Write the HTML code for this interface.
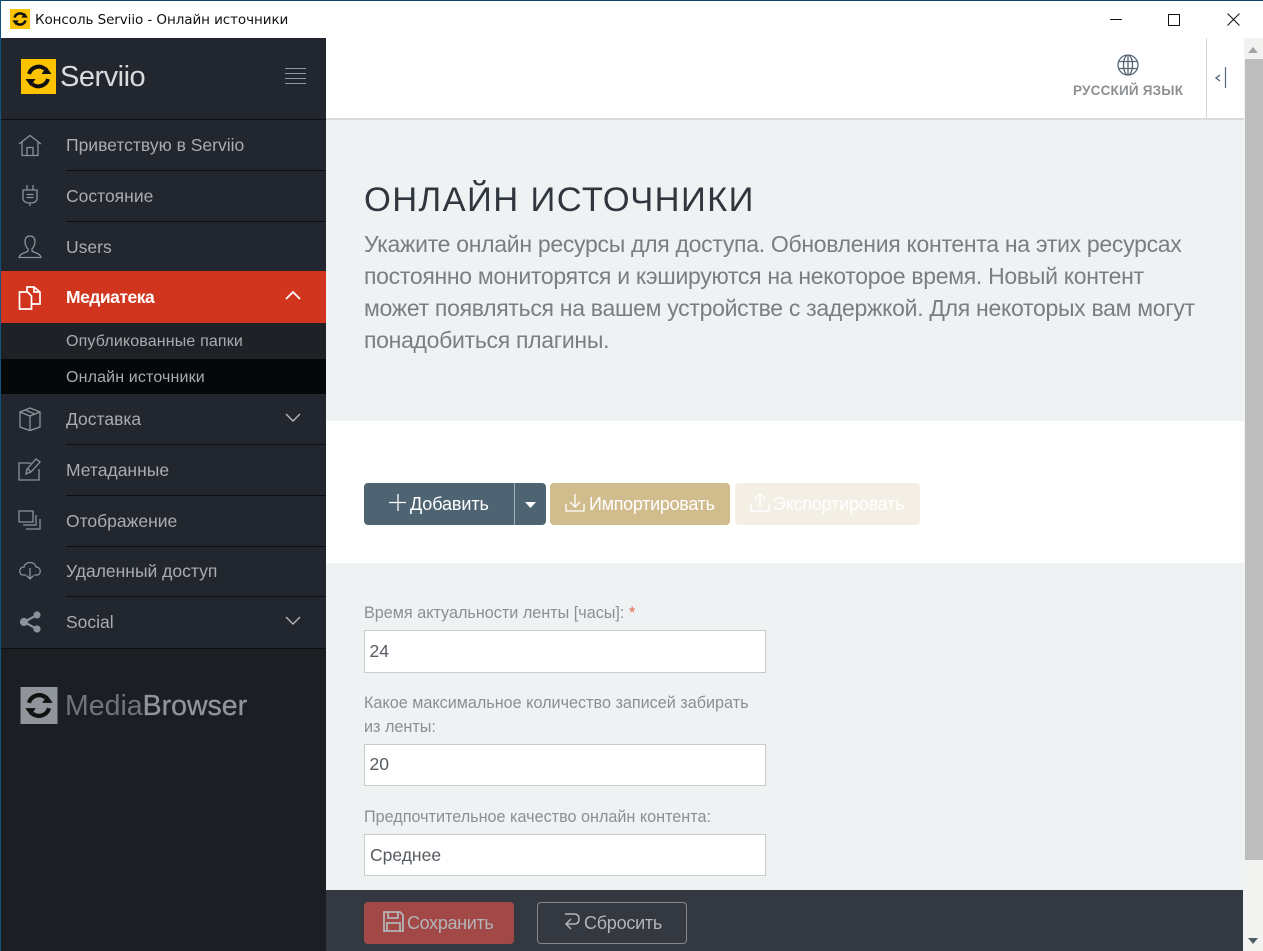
<!DOCTYPE html>
<html lang="ru"><head><meta charset="utf-8"><title>Консоль Serviio - Онлайн источники</title>
<style>
html,body{margin:0;padding:0;width:1263px;height:951px;overflow:hidden;background:#fff;font-family:"Liberation Sans",sans-serif}
.a{position:absolute;white-space:nowrap}
#wrap{position:relative;width:1263px;height:951px;overflow:hidden}
.nav{position:absolute;left:66px;font-size:17.5px;color:#a9adb1;line-height:20px;white-space:nowrap}
.sep{position:absolute;left:66px;width:260px;height:1px;background:#0d0f12}
.ic{position:absolute;left:17px;width:26px;height:26px;fill:none;stroke:#8a929a;stroke-width:1.3}
.chev{position:absolute;left:285px;width:16px;height:10px;fill:none;stroke:#b5b9bd;stroke-width:1.4}
.lbl{position:absolute;left:364px;font-size:16.2px;color:#8b8f93;line-height:24px;white-space:nowrap}
.inp{position:absolute;left:364px;width:395.500px;height:40px;background:#fff;border:1px solid #c9cccd;font-size:17.5px;color:#555b61;line-height:40px;padding-left:4.500px}
.btn{position:absolute;top:483px;height:42px;border-radius:4px;color:#fff;font-size:18px;line-height:42px;white-space:nowrap;letter-spacing:-.33px}
</style></head><body><div id="wrap">

<!-- title bar -->
<div class="a" style="left:0;top:0;width:1263px;height:1px;background:#0f4468"></div>
<div class="a" style="left:0;top:0;width:1px;height:951px;background:#13527c"></div>
<svg class="a" style="left:10px;top:9px" width="20" height="20" viewBox="0 0 35 35"><rect width="35" height="35" fill="#fdc300"/><path d="M8 15a10 10 0 0 1 16-5M27 20a10 10 0 0 1-16 5" fill="none" stroke="#111" stroke-width="4.500"/><path d="M20 15h11l-5-8zM4 20h11l-5 8z" fill="#111"/></svg>
<div class="a" style="left:35px;top:11px;font-family:'DejaVu Sans',sans-serif;font-size:13.500px;line-height:18px;color:#111;letter-spacing:-.08px">Консоль Serviio - Онлайн источники</div>
<svg class="a" style="left:1105px;top:10px" width="150" height="20" fill="none" stroke="#111" stroke-width="1"><path d="M5 9.500h12"/><rect x="63.500" y="4.500" width="11" height="11"/><path d="M122.500 3.500l12 12M134.500 3.500l-12 12"/></svg>

<!-- sidebar -->
<div class="a" style="left:1px;top:38px;width:325px;height:913px;background:#1b1e23"></div>
<div class="a" style="left:1px;top:38px;width:325px;height:611px;background:#22262e"></div>
<div class="a" style="left:1px;top:119px;width:325px;height:1px;background:#0d0f12"></div>
<svg class="a" style="left:21px;top:59px" width="35" height="35" viewBox="0 0 35 35"><rect width="35" height="35" fill="#fdc300"/><path d="M8 15a10 10 0 0 1 16-5M27 20a10 10 0 0 1-16 5" fill="none" stroke="#111" stroke-width="4"/><path d="M20.500 15h10l-5-7zM4.500 20h10l-5 7z" fill="#111"/></svg>
<div class="a" style="left:60px;top:59px;font-size:29px;line-height:36px;color:#d8dadc;letter-spacing:-.5px">Serviio</div>
<svg class="a" style="left:285px;top:68px" width="21" height="17" stroke="#8d98a2" stroke-width="1"><path d="M0 .5h21M0 5.500h21M0 10.500h21M0 15.500h21"/></svg>

<!-- nav rows -->
<svg class="ic" style="top:132px" viewBox="0 0 26 26"><path d="M2 12L13 3.500 24 12M5 10v13.500h16V10M10 23.500v-8h6v8"/></svg>
<div class="nav" style="top:135px">Приветствую в Serviio</div>
<div class="sep" style="top:170px"></div>
<svg class="ic" style="top:183px" viewBox="0 0 26 26"><path d="M6 7h14v8q0 5-7 5t-7-5zM10 2v5M16 2v5M13 20v3M9.500 11.500h7M9.500 14.500h7"/></svg>
<div class="nav" style="top:186px">Состояние</div>
<div class="sep" style="top:221px"></div>
<svg class="ic" style="top:234px" viewBox="0 0 26 26"><path d="M13 2c-4 0-5 3-5 6 0 3 2 6 3 7v2c-2 2-8 2-9 6.500h22c-1-4.500-7-4.500-9-6.500v-2c1-1 3-4 3-7 0-3-1-6-5-6z"/></svg>
<div class="nav" style="top:237px">Users</div>

<div class="a" style="left:1px;top:271px;width:325px;height:52px;background:#d2351e"></div>
<svg class="ic" style="top:285px;stroke:#fff;stroke-width:1.700" viewBox="0 0 26 26"><path d="M2.500 7h8l4 4v13h-12zM10 7V2h7l6 5v12h-8M17 2v5h6"/></svg>
<div class="nav" style="top:287px;color:#fff;font-weight:700;letter-spacing:-.5px">Медиатека</div>
<svg class="chev" style="top:290px;stroke:#fff;stroke-width:1.800" viewBox="0 0 16 10"><path d="M1 9l7-7 7 7"/></svg>

<div class="a" style="left:1px;top:323px;width:325px;height:36px;background:#1e2126"></div>
<div class="a" style="left:1px;top:359px;width:325px;height:35px;background:#060708"></div>
<div class="nav" style="top:332px;font-size:16px;letter-spacing:.15px">Опубликованные папки</div>
<div class="nav" style="top:368px;font-size:16px;letter-spacing:.15px">Онлайн источники</div>

<svg class="ic" style="top:406px" viewBox="0 0 26 26"><path d="M13 2L3 6v15l10 3.500 10-3.500V6zM3 6l10 4 10-4M13 10v14.500M8 4l10 4"/></svg>
<div class="nav" style="top:409px">Доставка</div>
<svg class="chev" style="top:413px" viewBox="0 0 16 10"><path d="M1 1l7 7 7-7"/></svg>
<div class="sep" style="top:444px"></div>
<svg class="ic" style="top:456px" viewBox="0 0 26 26"><path d="M14 7H2v17h20V13M9 18l1-5L19 3l4 3-9 10zM11 13l3 3"/></svg>
<div class="nav" style="top:460px">Метаданные</div>
<div class="sep" style="top:495px"></div>
<svg class="ic" style="top:508px" viewBox="0 0 26 26"><path d="M2 3h14v11H2zM19 7v10H6M23 11v10H9"/></svg>
<div class="nav" style="top:511px">Отображение</div>
<div class="sep" style="top:546px"></div>
<svg class="ic" style="top:557px" viewBox="0 0 26 26"><path d="M9 18H6c-4.500 0-4.500-8 1-8 1-6 11-6 12 0 5.500 0 5.500 8 1 8h-3M13 11v11M9.500 18.500l3.500 3.500 3.500-3.500"/></svg>
<div class="nav" style="top:561px">Удаленный доступ</div>
<div class="sep" style="top:596px"></div>
<svg class="ic" style="top:609px;fill:#8a929a;stroke:#8a929a;stroke-width:2.200" viewBox="0 0 26 26"><circle cx="7" cy="13" r="3"/><circle cx="20" cy="6" r="2.500"/><circle cx="20" cy="20" r="2.500"/><path d="M7 13l13-7M7 13l13 7"/></svg>
<div class="nav" style="top:612px">Social</div>
<svg class="chev" style="top:616px" viewBox="0 0 16 10"><path d="M1 1l7 7 7-7"/></svg>
<div class="a" style="left:1px;top:648px;width:325px;height:1px;background:#0d0f12"></div>

<svg class="a" style="left:20px;top:687px" width="38" height="37" viewBox="0 0 35 35"><rect width="35" height="35" fill="#8f959b"/><path d="M8 15a10 10 0 0 1 16-5M27 20a10 10 0 0 1-16 5" fill="none" stroke="#111" stroke-width="4"/><path d="M20.500 15h10l-5-7zM4.500 20h10l-5 7z" fill="#111"/></svg>
<div class="a" style="left:65px;top:686px;font-size:28.500px;line-height:40px;color:#6f757b;letter-spacing:0">Media<span style="color:#8f959b;-webkit-text-stroke:.3px #8f959b">Browser</span></div>

<!-- main -->
<div class="a" style="left:326px;top:38px;width:918px;height:913px;background:#eff2f3"></div>
<div class="a" style="left:326px;top:38px;width:918px;height:80px;background:#fff"></div>
<div class="a" style="left:326px;top:118px;width:918px;height:2px;background:#d8dadb"></div>
<div class="a" style="left:1206px;top:38px;width:1px;height:80px;background:#d2d4d5"></div>
<svg class="a" style="left:1116px;top:53px" width="24" height="24" viewBox="0 0 24 24" fill="none" stroke="#566878" stroke-width="1.300"><circle cx="12" cy="12" r="10"/><ellipse cx="12" cy="12" rx="4.500" ry="10"/><path d="M12 2v20M2.500 8.500h19M2.500 15.500h19"/></svg>
<div class="a" style="left:1073px;top:83px;font-size:13.500px;font-weight:700;line-height:16px;color:#8d9093;letter-spacing:.2px">РУССКИЙ ЯЗЫК</div>
<svg class="a" style="left:1214px;top:67px" width="14" height="22" fill="none" stroke="#566878"><path d="M6 8L2 11l4 3" stroke-width="1.400"/><path d="M11.500 0v21" stroke-width="1.200"/></svg>

<div class="a" style="left:364px;top:179px;font-size:34.500px;line-height:42px;color:#30363e;letter-spacing:1.400px">ОНЛАЙН ИСТОЧНИКИ</div>
<div class="a" style="left:364px;top:228px;font-size:23px;line-height:32px;color:#7a7e82;letter-spacing:-.295px">Укажите онлайн ресурсы для доступа. Обновления контента на этих ресурсах<br>постоянно мониторятся и кэшируются на некоторое время. Новый контент<br>может появляться на вашем устройстве с задержкой. Для некоторых вам могут<br>понадобиться плагины.</div>

<div class="a" style="left:326px;top:421px;width:918px;height:142px;background:#fff"></div>

<div class="btn" style="left:364px;width:150px;background:#4e6472;border-radius:4px 0 0 4px"></div>
<div class="btn" style="left:515px;width:31px;background:#4e6472;border-radius:0 4px 4px 0"></div>
<div class="a" style="left:514px;top:483px;width:1px;height:42px;background:#a8b2b9"></div>
<svg class="a" style="left:389px;top:494px" width="18" height="18" stroke="#fff" stroke-width="1.300"><path d="M9 0v17M0 8.500h17"/></svg>
<div class="btn" style="left:410px;letter-spacing:-.1px;background:none;font-weight:400">Добавить</div>
<svg class="a" style="left:525px;top:502px" width="11" height="6"><path d="M0 0h11L5.500 6z" fill="#fff"/></svg>

<div class="btn" style="left:550px;width:180px;background:#d1bc8e"></div>
<svg class="a" style="left:565px;top:493px" width="21" height="21" fill="none" stroke="#fff" stroke-width="1.300"><path d="M1 11v7h18v-7M10 1v13M5 9l5 5 5-5"/></svg>
<div class="btn" style="left:589px;letter-spacing:-.3px;background:none">Импортировать</div>

<div class="btn" style="left:735px;width:185px;background:#f3efe5"></div>
<svg class="a" style="left:750px;top:493px" width="21" height="21" fill="none" stroke="#fff" stroke-width="1.300"><path d="M1 11v7h18v-7M10 14V1M5 6l5-5 5 5"/></svg>
<div class="btn" style="left:773px;letter-spacing:-.22px;background:none">Экспортировать</div>

<div class="lbl" style="top:601px">Время актуальности ленты [часы]: <span style="color:#e0694d">*</span></div>
<div class="inp" style="top:630px;height:41px;line-height:41px">24</div>
<div class="lbl" style="top:691px">Какое максимальное количество записей забирать<br>из ленты:</div>
<div class="inp" style="top:744px;line-height:38px">20</div>
<div class="lbl" style="top:805px">Предпочтительное качество онлайн контента:</div>
<div class="inp" style="top:834px;padding-left:5px;width:395px">Среднее</div>

<!-- footer -->
<div class="a" style="left:326px;top:890px;width:917px;height:61px;background:#343841"></div>
<div class="btn" style="left:364px;top:902px;width:150px;background:#a24947"></div>
<svg class="a" style="left:383px;top:911px" width="21" height="21" fill="none" stroke="#b3b5b7" stroke-width="1.800"><path d="M1 1h16l3 3v16H1zM5 1v6h10V1M4 20v-8h13v8"/></svg>
<div class="btn" style="left:407px;top:902px;background:none;color:#b3b5b7">Сохранить</div>
<div class="btn" style="left:537px;top:902px;width:148px;height:40px;border:1px solid #85888d;background:none"></div>
<svg class="a" style="left:563px;top:912px" width="17" height="20" fill="none" stroke="#b3b5b7" stroke-width="1.500"><path d="M2 2h9q5 0 5 5t-5 5H3M8 7l-5 5 5 5"/></svg>
<div class="btn" style="left:584px;top:902px;letter-spacing:-.25px;background:none;color:#b3b5b7">Сбросить</div>

<!-- scrollbar -->
<div class="a" style="left:1244px;top:38px;width:19px;height:913px;background:#f2f2f0"></div>
<div class="a" style="left:1245px;top:59px;width:18px;height:801px;background:#bdbdbd"></div>
<svg class="a" style="left:1248px;top:47px" width="11" height="7"><path d="M0 6h10L5 0z" fill="#a3a3a3"/></svg>
<svg class="a" style="left:1248px;top:938px" width="11" height="7"><path d="M0 0h10L5 6z" fill="#4e5c68"/></svg>

</div></body></html>
